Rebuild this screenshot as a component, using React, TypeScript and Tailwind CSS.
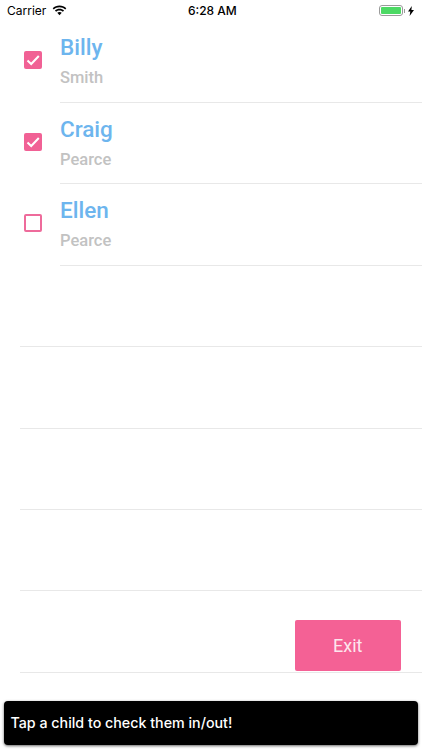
const children = [
  { first: "Billy", last: "Smith", checked: true },
  { first: "Craig", last: "Pearce", checked: true },
  { first: "Ellen", last: "Pearce", checked: false },
];

function StatusBar() {
  return (
    <div className="relative flex h-[21.3px] items-center justify-between pl-[7px] pr-[8px] font-['Inter',sans-serif] text-[12px] text-black">
      <div className="flex items-center gap-[6px]">
        <span>Carrier</span>
        <svg width="15" height="11" viewBox="0 0 15 11" fill="currentColor">
          <path d="M7.5 2.2c2.2 0 4.2.85 5.7 2.25l1.1-1.15C12.5 1.6 10.1.6 7.5.6S2.5 1.6.7 3.3l1.1 1.15C3.3 3.05 5.3 2.2 7.5 2.2z" />
          <path d="M7.5 5.4c1.3 0 2.5.5 3.4 1.3l1.15-1.15C10.85 4.45 9.25 3.8 7.5 3.8s-3.35.65-4.55 1.75L4.1 6.7c.9-.8 2.1-1.3 3.4-1.3z" />
          <path d="M7.5 7c-.85 0-1.6.3-2.2.85L7.5 10.2l2.2-2.35C9.1 7.3 8.35 7 7.5 7z" />
        </svg>
      </div>
      <span className="absolute left-[188px] top-[2px] font-medium">6:28 AM</span>
      <div className="flex items-center gap-[3px]">
        <div className="flex items-center">
          <div className="h-[11px] w-[24px] rounded-[3px] border border-[#9a9a9a] p-[1px]">
            <div className="h-full w-full rounded-[1px] bg-[#4cd964]" />
          </div>
          <div className="ml-[1px] h-[4px] w-[1px] bg-[#9a9a9a]" />
        </div>
        <svg width="6" height="10" viewBox="0 0 6 10" fill="black">
          <path d="M3.8 0 0 5.6h2.3L1.6 10 6 3.9H3.4z" />
        </svg>
      </div>
    </div>
  );
}

function Checkbox({ checked }: { checked: boolean }) {
  if (checked) {
    return (
      <div className="h-[18px] w-[18px] rounded-[2px] bg-[#f16195]">
        <svg width="18" height="18" viewBox="0 0 18 18" fill="none" stroke="white" strokeWidth="2">
          <path d="M3.5 9.5 7.2 13 14.8 5" />
        </svg>
      </div>
    );
  }
  return <div className="h-[18px] w-[18px] rounded-[2px] border-2 border-[#ee6b9b]" />;
}

export default function App() {
  return (
    <div className="relative h-[750px] w-[422px] overflow-hidden bg-white font-['Roboto',sans-serif]">
      <StatusBar />
      <div>
        {children.map((child) => (
          <div key={child.first} className="flex h-[81.46px] pl-[24px]">
            <div className="flex w-[36px] items-center pb-[3.5px]">
              <Checkbox checked={child.checked} />
            </div>
            <div className="flex-1 border-b border-[#e8e8e8] pt-[8px]">
              <div className="text-[22.5px] leading-[36px] font-medium text-[#6db5ee]">{child.first}</div>
              <div className="mt-[2px] text-[16.5px] leading-[22px] font-medium text-[#c2c2c2]">{child.last}</div>
            </div>
          </div>
        ))}
        {[0, 1, 2, 3, 4].map((i) => (
          <div key={i} className="ml-[20px] h-[81.46px] border-b border-[#e8e8e8]" />
        ))}
      </div>

      <button className="absolute left-[295px] top-[620px] flex h-[51px] w-[105.5px] items-center justify-center rounded-[2px] bg-[#f46195] text-[18px] text-[#fde6ee]">
        Exit
      </button>

      <div className="absolute left-[4px] top-[701px] flex h-[44px] w-[414px] items-center rounded-[4px] bg-black pl-[6.5px] font-['Inter',sans-serif] text-[14.25px] font-medium text-white shadow-[0_1px_3px_rgba(0,0,0,0.6)]">
        Tap a child to check them in/out!
      </div>
    </div>
  );
}
